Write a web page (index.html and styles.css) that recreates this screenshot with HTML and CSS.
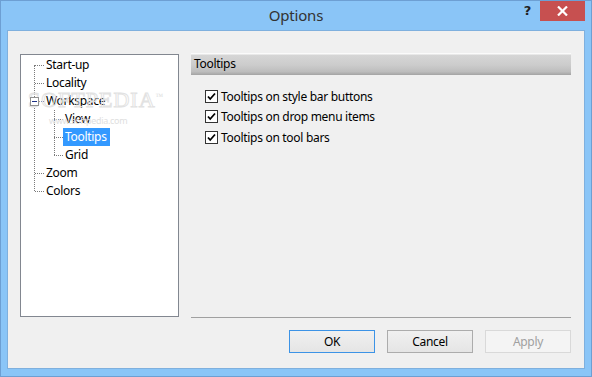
FILE: index.html
```html
<!DOCTYPE html>
<html>
<head>
  <meta charset="UTF-8">
  <title>Options</title>
  <link rel="stylesheet" href="styles.css">
</head>
<body>
  <div class="window">
    <div class="titlebar">
      <div></div>
      <div class="title">Options</div>
      <div class="controls">
        <span class="help">?</span>
        <span class="close">
          <svg width="11" height="10" viewBox="0 0 11 10"><path d="M1 0.5 L10 9.5 M10 0.5 L1 9.5" stroke="#fff" stroke-width="2.2"/></svg>
        </span>
      </div>
    </div>

    <div class="client">
      <div class="main">
        <div class="tree">
          <ul class="root">
            <li><span class="node">Start-up</span></li>
            <li><span class="node">Locality</span></li>
            <li>
              <span class="node"><span class="expander"></span>Workspace</span>
              <ul class="children">
                <li><span class="node">View</span></li>
                <li><span class="node selected">Tooltips</span></li>
                <li><span class="node">Grid</span></li>
              </ul>
            </li>
            <li><span class="node">Zoom</span></li>
            <li><span class="node">Colors</span></li>
          </ul>
          <div class="watermark">SOFTPEDIA<sup>™</sup></div>
          <div class="watermark-url">www.softpedia.com</div>
        </div>

        <div class="panel">
          <div class="panel-header">Tooltips</div>
          <div class="options">
            <label class="check">
              <svg width="13" height="13" viewBox="0 0 13 13"><rect x="0.5" y="0.5" width="12" height="12" fill="#fff" stroke="#333"/><path d="M3 6.5 L5.2 9 L10 3.5" fill="none" stroke="#000" stroke-width="1.8"/></svg>
              Tooltips on style bar buttons
            </label>
            <label class="check">
              <svg width="13" height="13" viewBox="0 0 13 13"><rect x="0.5" y="0.5" width="12" height="12" fill="#fff" stroke="#333"/><path d="M3 6.5 L5.2 9 L10 3.5" fill="none" stroke="#000" stroke-width="1.8"/></svg>
              Tooltips on drop menu items
            </label>
            <label class="check">
              <svg width="13" height="13" viewBox="0 0 13 13"><rect x="0.5" y="0.5" width="12" height="12" fill="#fff" stroke="#333"/><path d="M3 6.5 L5.2 9 L10 3.5" fill="none" stroke="#000" stroke-width="1.8"/></svg>
              Tooltips on tool bars
            </label>
          </div>
          <div class="separator"></div>
        </div>
      </div>

      <div class="buttons">
        <button class="btn default">OK</button>
        <button class="btn">Cancel</button>
        <button class="btn disabled">Apply</button>
      </div>
    </div>
  </div>
</body>
</html>
```

FILE: styles.css
```css
* {
  box-sizing: border-box;
}

body {
  margin: 0;
  font-family: "Noto Sans", "Open Sans", sans-serif;
  font-size: 12px;
  letter-spacing: -0.3px;
  color: #000;
}

.window {
  width: 592px;
  height: 377px;
  background-color: #8ac5f7;
  border: 1px solid #6d9fd3;
  display: flex;
  flex-direction: column;
}

/* title bar */
.titlebar {
  height: 29px;
  display: grid;
  grid-template-columns: 1fr auto 1fr;
}

.title {
  font-size: 15px;
  color: #333;
  line-height: 29px;
  letter-spacing: -0.2px;
}

.controls {
  justify-self: end;
  display: flex;
  align-items: flex-start;
  margin-right: 6px;
}

.help {
  font-family: "DejaVu Sans", sans-serif;
  font-weight: bold;
  font-size: 13px;
  color: #222;
  margin-top: 2px;
  margin-right: 9px;
}

.close {
  width: 45px;
  height: 20px;
  background-color: #c75050;
  display: flex;
  align-items: center;
  justify-content: center;
}

/* client area */
.client {
  flex: 1;
  margin: 0 6px 7px 6px;
  background-color: #f0f0f0;
  border: 1px solid #7fb0de;
  padding: 23px 12px 15px 12px;
  display: flex;
  flex-direction: column;
}

.main {
  flex: 1;
  display: flex;
  gap: 12px;
}

/* tree */
.tree {
  width: 159px;
  height: 263px;
  background-color: #fff;
  border: 1px solid #828790;
  padding-top: 1px;
  position: relative;
  overflow: hidden;
}

.tree ul {
  list-style: none;
  margin: 0;
  padding: 0;
  position: relative;
}

.root::before {
  content: "";
  position: absolute;
  left: 13px;
  top: 9px;
  bottom: 9px;
  border-left: 1px dotted #7a7a7a;
}

.children {
  padding-left: 19px !important;
}

.children::before {
  content: "";
  position: absolute;
  left: 33px;
  top: 0;
  bottom: 9px;
  border-left: 1px dotted #7a7a7a;
}

.node {
  display: block;
  height: 18px;
  line-height: 18px;
  padding-left: 25px;
  position: relative;
  white-space: nowrap;
}

.node::before {
  content: "";
  position: absolute;
  left: 14px;
  top: 9px;
  width: 9px;
  border-top: 1px dotted #7a7a7a;
}

.node.selected {
  background: linear-gradient(to right, transparent 23px, #3399ff 23px, #3399ff 70px, transparent 70px);
  color: #fff;
}

.expander {
  position: absolute;
  left: 9px;
  top: 5px;
  width: 9px;
  height: 9px;
  border: 1px solid #919191;
  background-color: #fff;
  z-index: 1;
}

.expander::after {
  content: "";
  position: absolute;
  left: 1px;
  top: 3px;
  width: 5px;
  border-top: 1px solid #1e3287;
}

.watermark {
  position: absolute;
  left: 7px;
  top: 32px;
  font-family: "Liberation Serif", serif;
  font-size: 22px;
  letter-spacing: 1px;
  color: transparent;
  -webkit-text-stroke: 1px #e2e2e2;
}

.watermark sup {
  font-size: 8px;
  -webkit-text-stroke: 0;
  color: #ddd;
}

.watermark-url {
  position: absolute;
  left: 28px;
  top: 59px;
  font-size: 9px;
  color: #dedede;
}

/* right panel */
.panel {
  flex: 1;
  display: flex;
  flex-direction: column;
  margin-top: -1px;
}

.panel-header {
  height: 22px;
  line-height: 21px;
  padding-left: 3px;
  margin-right: 1px;
  background: linear-gradient(#fbfbfb 0, #fbfbfb 1px, #d6d6d6 2px, #cccccc 55%, #bdbdbd 85%, #a3a3a3 100%);
}

.options {
  flex: 1;
  padding: 11px 0 0 14px;
  display: flex;
  flex-direction: column;
}

.check {
  height: 20.5px;
  display: flex;
  align-items: center;
  gap: 3px;
}

.separator {
  height: 1px;
  margin-right: 1px;
  background-color: #a0a0a0;
}

/* buttons */
.buttons {
  display: flex;
  justify-content: flex-end;
  gap: 12px;
  margin-top: 12px;
  padding-right: 1px;
}

.btn {
  width: 86px;
  height: 23px;
  font-family: inherit;
  font-size: 12px;
  letter-spacing: -0.3px;
  color: #000;
  border: 1px solid #acacac;
  background: linear-gradient(#f0f0f0, #e5e5e5);
  padding: 0;
}

.btn.default {
  border-color: #3c93e6;
}

.btn.disabled {
  color: #a0a0a0;
  border-color: #d9d9d9;
  background: #f4f4f4;
}
```
